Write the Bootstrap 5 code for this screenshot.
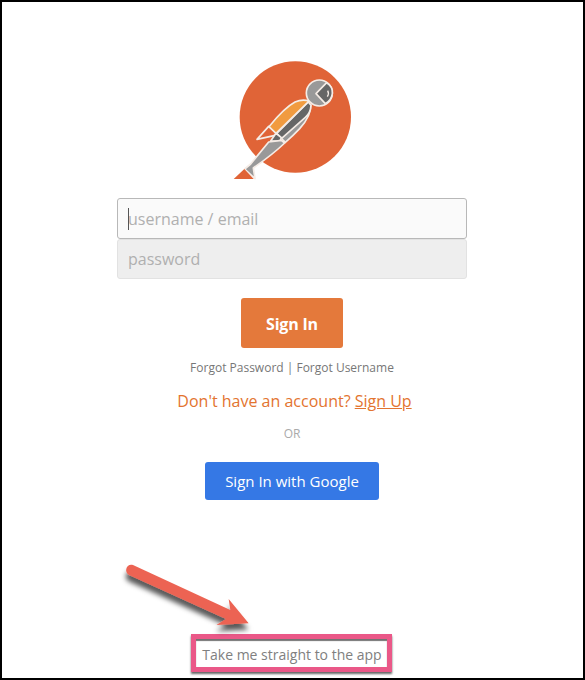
<!DOCTYPE html>
<html lang="en">
<head>
<meta charset="utf-8">
<meta name="viewport" content="width=device-width, initial-scale=1">
<title>Sign In</title>
<link href="https://cdn.jsdelivr.net/npm/bootstrap@5.3.0/dist/css/bootstrap.min.css" rel="stylesheet">
<style>
body { font-family: "Open Sans", sans-serif; background: #fff; overflow: hidden; }
.login-frame { height: 680px; border: 2px solid #000; padding-top: 48px; padding-right: 1px; }
.logo { width: 140px; height: 140px; }
.login-form { width: 350px; margin-top: 8px; }
.login-form .form-control { height: 40px; padding: 0 10px; font-size: 16px; border-radius: 3px; border: 1px solid #e2e2e2; background: #eee; box-shadow: none; }
.login-form .form-control::placeholder { color: #b0b0b0; opacity: 1; }
.login-form .field-active { height: 41px; background: #fafafa; border-color: #b8b8b8; }
.caret-line { left: 11px; top: 10px; width: 1px; height: 22px; background: #555; }
.btn-signin { width: 102px; height: 50px; margin-top: 19px; font-size: 16px; font-weight: 700; letter-spacing: -.2px; color: #fff; background: #e4793b; border: 0; border-radius: 3px; padding: 1px 0 0; }
.forgot { margin-top: 11px; font-size: 12px; line-height: 18px; color: #777; }
.signup { margin-top: 12px; padding-left: 5px; font-size: 16px; line-height: 24px; color: #e3742f; }
.or-text { margin-top: 12px; font-size: 12px; line-height: 18px; color: #aaa; }
.btn-google { width: 174px; height: 38px; margin-top: 19px; font-size: 15px; color: #fff; background: #3578e5; border: 0; border-radius: 3px; padding: 0; }
.skip-box { width: 201px; height: 38px; padding: 2px 0 0 1px; margin: 134px 1px 0 0; border: 5px solid #ea5888; font-size: 14px; color: #808080; box-shadow: 0 2px 2px rgba(0,0,0,.6), inset 0 2px 1px rgba(0,0,0,.55); }
.pointer { left: 108px; top: 548px; width: 150px; height: 90px; }
</style>
<script src="https://cdn.jsdelivr.net/npm/bootstrap@5.3.0/dist/js/bootstrap.bundle.min.js"></script>
</head>
<body>
<main class="login-frame position-relative d-flex flex-column align-items-center">
  <svg class="logo flex-shrink-0" viewBox="-8 -1 420 420" aria-label="Postman">
    <circle cx="212" cy="200" r="167" fill="#e06437"/>
    <g stroke="#f5ece6" stroke-width="5" stroke-linejoin="round">
      <path d="M132 228L97 267L148 256L158 250Z" fill="#e06437"/>
      <path d="M258 163C260 190 245 213 225 235C211 250 196 264 182 276L166 260Z" fill="#999"/>
      <path d="M251 155L259 165C258 182 253 192 242 201L171 264L156 249Z" fill="#666"/>
      <path d="M133 229C158 198 187 168 211 155C225 149 240 148 253 152L154 249Z" fill="#f19b40"/>
      <path d="M138 272L154 249L170 262L166 272Z" fill="#666"/>
      <path d="M132 275L170 270L180 278C151 306 116 332 86 353L91 385L60 356L78 341Z" fill="#999"/>
      <circle cx="284" cy="128" r="39" fill="#999"/>
      <path d="M306 97L274 130L302 160C327 145 332 113 306 97Z" fill="#666"/>
      <path d="M309 121Q314 130 308 139" fill="none" stroke-width="4"/>
    </g>
    <path d="M27 386L59 356L87 386Z" fill="#e06437"/>
  </svg>
  <form class="login-form d-flex flex-column align-items-center">
    <div class="position-relative w-100">
      <input class="form-control field-active" type="text" placeholder="username / email" aria-label="username / email">
      <span class="caret-line position-absolute"></span>
    </div>
    <input class="form-control" type="password" placeholder="password" aria-label="password">
    <button class="btn btn-signin" type="button">Sign In</button>
  </form>
  <div class="forgot text-nowrap">Forgot Password | Forgot Username</div>
  <div class="signup text-nowrap">Don't have an account? <span class="text-decoration-underline">Sign Up</span></div>
  <div class="or-text">OR</div>
  <button class="btn btn-google" type="button">Sign In with Google</button>
  <div class="skip-box d-flex align-items-center justify-content-center text-nowrap"><span>Take me straight to the app</span></div>
  <svg class="pointer position-absolute" viewBox="0 0 450 270" aria-hidden="true">
    <defs><filter id="shade" x="-20%" y="-20%" width="140%" height="160%"><feDropShadow dx="-1" dy="19" stdDeviation="8" flood-color="#000" flood-opacity=".65"/></filter></defs>
    <path d="M69 45L361 180L356 147L416 220L319 225L348 207L57 75C41 66 49 39 69 45Z" fill="#ec6453" filter="url(#shade)"/>
  </svg>
</main>
</body>
</html>
